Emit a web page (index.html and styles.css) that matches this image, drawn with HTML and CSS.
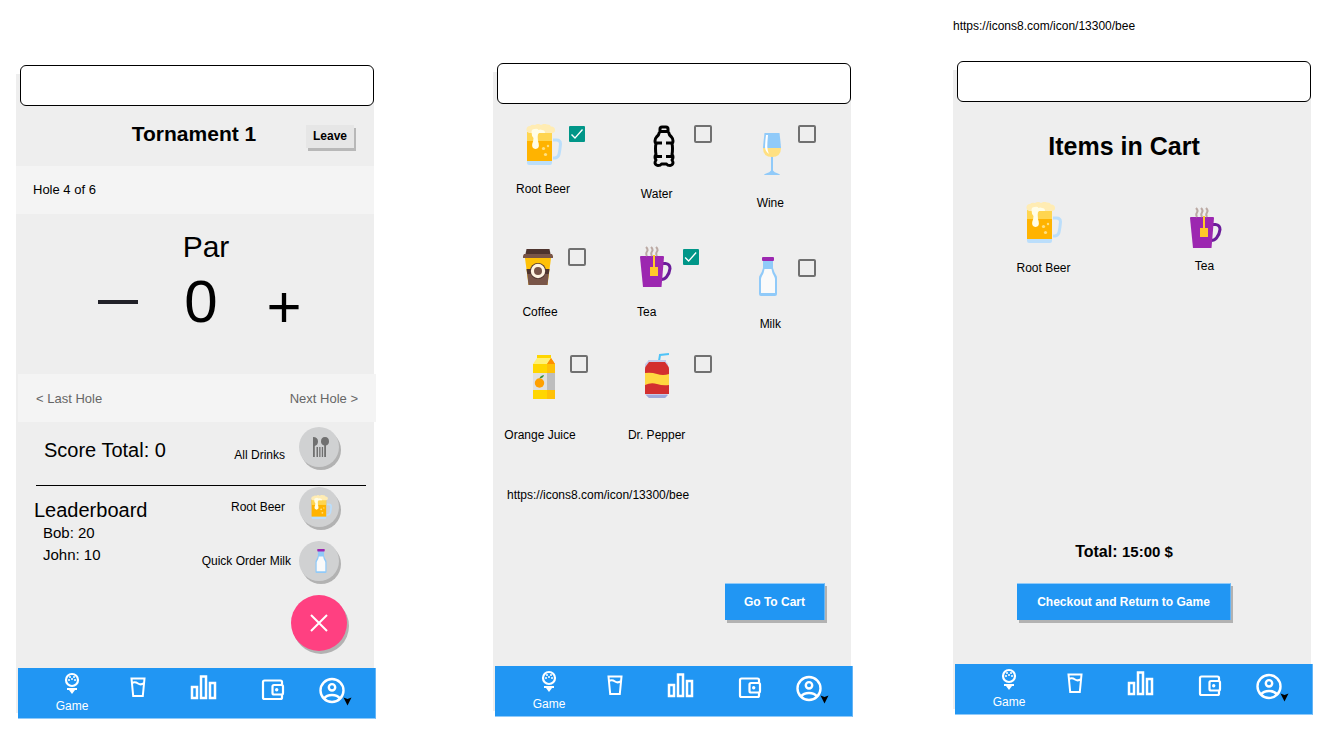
FILE: index.html
```html
<!DOCTYPE html>
<html lang="en">
<head>
<meta charset="utf-8">
<meta name="viewport" content="width=device-width, initial-scale=1">
<title>Tournament drinks</title>
<link rel="stylesheet" href="styles.css">
</head>
<body>
<svg class="sprite" aria-hidden="true">
  <symbol id="beer" viewBox="0 0 36 41">
    <path d="M27 16h3.500q4 0 4 4-.5 6-1.500 10.500-1 3-4 3.500h-2" fill="none" stroke="#bbdefb" stroke-width="3"/>
    <path d="M1 36h25v3q0 2-2 2H3q-2 0-2-2z" fill="#bbdefb"/>
    <path d="M1 8h25v29H1z" fill="#ffb300"/>
    <path d="M1 8h25v9H1z" fill="#ffd54f"/>
    <path d="M3 9Q0 8 .5 5 1 2 4 2q2-2 5-1 3-2 6 0 3-2 6-.5 3-.5 4 2 4 0 4 3.500 0 3-3 3z" fill="#ffecb3"/>
    <path d="M5.500 8q0-3 3-3 3-1 4 1 2-1 3.500 0 3 0 3 3h-6q-1.500 1-1.300 4 0 4 1 6.500 1 5-3.200 5.500-4-.5-3.300-5 1.300-3 1.300-6Q5.500 12 5.500 8z" fill="#fffde7"/>
    <g fill="#ffe082"><circle cx="17.500" cy="24.500" r="1.600"/><circle cx="22" cy="22" r="1.200"/><circle cx="19.500" cy="30.500" r="1.600"/></g>
  </symbol>
  <symbol id="water" viewBox="0 0 22 42">
    <g fill="none" stroke="#000" stroke-width="3" stroke-linejoin="round">
      <path d="M7 7V4q0-2 2-2h4q2 0 2 2v3M6 6.500h10"/>
      <path d="M6.500 7Q6 10 3.500 12 2 13.500 2 16q0 2 1 3-.5 1-.5 4.500t.5 6Q2 30.500 2 32t1 3Q2 36.500 2 38q.5 2.300 3 2.500 2.500 0 3.500-1.500h5q1 1.500 3.500 1.500 2.500-.2 3-2.500 0-1.500-1-3 1-1.500 1-3t-1-2.500q.5-2.500.5-6t-.5-4.500Q20 18 20 16q0-2.500-1.500-4Q16 10 15.500 7"/>
      <path d="M3 18h6M13 18h6M3 31.500h6M13 31.500h6"/>
    </g>
  </symbol>
  <symbol id="wine" viewBox="0 0 18 42">
    <path d="M8 23h2v15h-2z" fill="#90caf9"/>
    <path d="M1 42q0-1 2-1.500 4-1 5-3h2q1 2 5 3 2 .5 2 1.500z" fill="#90caf9"/>
    <path d="M1.500 0h15q1 8 1.500 15H0Q.5 8 1.500 0z" fill="#90caf9"/>
    <path d="M0 15h18q0 9-9 9T0 15z" fill="#ffe082"/>
    <path d="M3 2h2q-.7 7-.7 12 .2 4 1.700 7Q2 18 2 13.500 2.300 7 3 2z" fill="#fff"/>
  </symbol>
  <symbol id="coffee" viewBox="0 0 30 36">
    <path d="M3.500 0h23l1 5h-25z" fill="#4e342e"/>
    <path d="M2 9h26l-3.500 27h-19z" fill="#ffc107"/>
    <path d="M3.500 20h23l-.7 5H4.200z" fill="#4e342e"/>
    <path d="M4.200 25h21.600l-1.300 11h-19z" fill="#795548"/>
    <path d="M1 5h28l1 2v2H0V7z" fill="#795548"/>
    <circle cx="15" cy="22" r="8" fill="#4e342e"/><circle cx="15" cy="22" r="7.200" fill="#fff3e0"/><circle cx="15" cy="22" r="4" fill="#795548"/>
  </symbol>
  <symbol id="tea" viewBox="0 0 32 41">
    <path d="M22.500 17.500h3q4.500.5 4.500 5-.5 5-3.500 8.500-2 2.500-5.500 2.500" fill="none" stroke="#6a1b9a" stroke-width="3"/>
    <path d="M1 10h22q1 0 1 1l-2.500 30H3L0 11q0-1 1-1z" fill="#9c27b0"/>
    <g fill="none" stroke="#bcaaa4" stroke-width="2"><path d="M6 1q2.500 2.500 1 4.500T7 10M11 1q2.500 2.500 1 4.500T12 10M16 1q2.500 2.500 1 4.500T17 10"/></g>
    <path d="M13 9h2v12h3v9h-8v-9h3z" fill="#ffca28"/>
  </symbol>
  <symbol id="milk" viewBox="0 0 18 39">
    <path d="M4 3h10v8q1 4 3 7 1 1 1 3v16q0 2-2 2H2q-2 0-2-2V21q0-2 1-3 2-3 3-7z" fill="#90caf9"/>
    <path d="M5.500 12h7q.5 4 2.500 7 1 2 1 3v14H2V22q0-1 1-3 2-3 2.500-7z" fill="#fafafa"/>
    <rect x="3" width="12" height="4" rx="1" fill="#9c27b0"/>
  </symbol>
  <symbol id="juice" viewBox="0 0 22 44">
    <path d="M4 0h14v3H4z" fill="#ffd600"/><path d="M4 3h14l-4 6H0z" fill="#fff176"/>
    <path d="M0 9h14v35H0z" fill="#ffd600"/><path d="M14 9l4-6 4 6v35h-8z" fill="#ffc107"/>
    <path d="M14 9l4-6 4 6z" fill="#ff8f00"/>
    <path d="M0 18h14v17H0z" fill="#e0e0e0"/><path d="M14 18h8v17h-8z" fill="#bdbdbd"/>
    <circle cx="6.500" cy="28" r="4.700" fill="#ffa000"/><path d="M6.500 23.500q.5-3 4.500-3.500-.5 3-4.500 3.500z" fill="#388e3c"/>
  </symbol>
  <symbol id="soda" viewBox="0 0 24 45">
    <path d="M14 8l1-6 9-1" fill="none" stroke="#4fc3f7" stroke-width="2"/>
    <path d="M3 7h18v2l2 2v30l-3 4H4l-4-4V11l3-3z" fill="#c5cae9"/>
    <path d="M1 42h22l-3 3H4z" fill="#9fa8da"/>
    <path d="M4 9h16l3 4q1 1 1 3v25H0V16q0-2 1-3z" fill="#d32f2f"/>
    <path d="M0 20q6-1 12 1t12 0v11q-6 1-12-1t-12 1z" fill="#ffd740"/>
  </symbol>
  <symbol id="cutlery" viewBox="0 0 16 20">
    <path d="M0 0q5 0 5 4.500Q5 8 1.800 9V20H0zM3.500 10h1.500v10H3.500zM6.200 10h1.300v10H6.200zM8.800 10h1.300v10H8.800zM11.200 8.500Q8 7.500 8 4.500 8 0 12 0t4 4.500q0 3-3 4V20h-1.800z" fill="#707070"/>
  </symbol>
  <symbol id="golf" viewBox="0 0 32 31">
    <circle cx="16" cy="12" r="6" fill="none" stroke="#fff" stroke-width="2.200"/>
    <g fill="#fff"><circle cx="14" cy="9" r="1"/><circle cx="18" cy="9" r="1"/><circle cx="13" cy="12" r="1"/><circle cx="16" cy="11" r="1"/><circle cx="19" cy="12" r="1"/><path d="M11 20h10v2h-2l-3 4-3-4h-2z"/></g>
  </symbol>
  <symbol id="glass" viewBox="0 0 32 36">
    <path d="M9.500 10.500h13l-1.700 17.500h-9.600zM10 15q3-1.500 6 .5t6-.5" fill="none" stroke="#fff" stroke-width="2"/>
  </symbol>
  <symbol id="bars" viewBox="0 0 32 36">
    <path d="M4 19h5v11H4zM13 8.500h5V30h-5zM22 15h5v15h-5z" fill="none" stroke="#fff" stroke-width="2.500"/>
  </symbol>
  <symbol id="wallet" viewBox="0 0 32 36">
    <g fill="none" stroke="#fff" stroke-width="2.200"><rect x="6" y="12.500" width="19" height="18.500" rx="1.500"/><rect x="15.500" y="17" width="10.500" height="9.500" rx="1.500" fill="#2196f3"/></g>
    <circle cx="19.700" cy="21.700" r="1.700" fill="#fff"/>
  </symbol>
  <symbol id="account" viewBox="0 0 46 40">
    <g fill="none" stroke="#fff" stroke-width="2.400"><circle cx="23" cy="22.500" r="11.500"/><circle cx="23" cy="19.300" r="3.200"/><path d="M15 30.500q2.500-3.500 8-3.500t8 3.500"/></g>
    <path d="M34.500 29.500l4 1.500 4-1.500-4 8z" fill="#000"/>
  </symbol>
</svg>

<main class="board">
  <section class="column column--game" aria-label="Game">
    <div class="phone">
      <input class="address" type="text" aria-label="Game address">
      <header class="titlebar">
        <h1 class="titlebar__name">Tornament 1</h1>
        <button class="leave" type="button">Leave</button>
      </header>
      <p class="hole">Hole 4 of 6</p>
      <div class="par">
        <h2 class="par__title">Par</h2>
        <div class="counter">
          <button class="counter__step" type="button" aria-label="Decrease"><span class="counter__minus"></span></button>
          <output class="counter__value">0</output>
          <button class="counter__step counter__step--plus" type="button">+</button>
        </div>
      </div>
      <div class="holes">
        <button class="holes__link" type="button">&lt; Last Hole</button>
        <button class="holes__link" type="button">Next Hole &gt;</button>
      </div>
      <div class="score">
        <p class="score__total">Score Total: 0</p>
        <div class="quick"><label for="all-drinks">All Drinks</label><button class="round" id="all-drinks" type="button"><svg width="16" height="20"><use href="#cutlery"/></svg></button></div>
      </div>
      <div class="standings">
        <div class="leaders">
          <h2 class="leaders__title">Leaderboard</h2>
          <p class="leaders__row">Bob: 20</p>
          <p class="leaders__row">John: 10</p>
        </div>
        <div class="orders">
          <div class="quick"><label for="order-beer">Root Beer</label><button class="round" id="order-beer" type="button"><svg width="21" height="24"><use href="#beer"/></svg></button></div>
          <div class="quick quick--tight"><label for="order-milk">Quick Order Milk</label><button class="round" id="order-milk" type="button"><svg width="14" height="24"><use href="#milk"/></svg></button></div>
          <button class="close" type="button" aria-label="Close"><svg width="18" height="18" viewBox="0 0 18 18"><path d="M1 1l16 16M17 1L1 17" stroke="#fff" stroke-width="2"/></svg></button>
        </div>
      </div>
      <nav class="tabs" aria-label="Game sections">
        <a class="tabs__item" href="#game"><svg width="32" height="31"><use href="#golf"/></svg><span>Game</span></a>
        <a class="tabs__item" href="#drinks" aria-label="Drinks"><svg width="32" height="36"><use href="#glass"/></svg></a>
        <a class="tabs__item" href="#scores" aria-label="Scores"><svg width="32" height="36"><use href="#bars"/></svg></a>
        <a class="tabs__item" href="#wallet-page" aria-label="Wallet"><svg width="32" height="36"><use href="#wallet"/></svg></a>
        <a class="tabs__item" href="#profile" aria-label="Account"><svg width="46" height="40"><use href="#account"/></svg></a>
      </nav>
    </div>
  </section>

  <section class="column column--menu" aria-label="Drinks menu">
    <div class="phone">
      <input class="address" type="text" aria-label="Menu address">
      <div class="drinks">
        <div class="drink drink--broad"><div class="drink__pick"><svg width="64" height="76"><use href="#beer" x="26" y="20" width="36" height="41"/></svg><input class="check" type="checkbox" id="d1" checked></div><label class="drink__name" for="d1">Root Beer</label></div>
        <div class="drink drink--broad drink--wide"><div class="drink__pick"><svg width="64" height="81"><use href="#water" x="39" y="21" width="22" height="42"/></svg><input class="check" type="checkbox" id="d2"></div><label class="drink__name" for="d2">Water</label></div>
        <div class="drink"><div class="drink__pick"><svg width="64" height="90"><use href="#wine" x="33" y="29" width="18" height="42"/></svg><input class="check" type="checkbox" id="d3"></div><label class="drink__name" for="d3">Wine</label></div>
        <div class="drink"><div class="drink__pick"><svg width="64" height="76"><use href="#coffee" x="23" y="22" width="30" height="36"/></svg><input class="check" type="checkbox" id="d4"></div><label class="drink__name" for="d4">Coffee</label></div>
        <div class="drink drink--narrow"><div class="drink__pick"><svg width="64" height="76"><use href="#tea" x="26" y="19" width="32" height="41"/></svg><input class="check" type="checkbox" id="d5" checked></div><label class="drink__name" for="d5">Tea</label></div>
        <div class="drink drink--low"><div class="drink__pick"><svg width="64" height="88"><use href="#milk" x="29" y="30" width="18" height="39"/></svg><input class="check" type="checkbox" id="d6"></div><label class="drink__name" for="d6">Milk</label></div>
        <div class="drink drink--high"><div class="drink__pick"><svg width="64" height="76"><use href="#juice" x="33" y="5" width="22" height="44"/></svg><input class="check" type="checkbox" id="d7"></div><label class="drink__name" for="d7">Orange Juice</label></div>
        <div class="drink drink--broad drink--high drink--wide"><div class="drink__pick"><svg width="64" height="76"><use href="#soda" x="31" y="3" width="24" height="45"/></svg><input class="check" type="checkbox" id="d8"></div><label class="drink__name" for="d8">Dr. Pepper</label></div>
      </div>
      <p class="source">https://icons8.com/icon/13300/bee</p>
      <button class="action action--cart" type="button">Go To Cart</button>
      <nav class="tabs" aria-label="Menu sections">
        <a class="tabs__item" href="#game"><svg width="32" height="31"><use href="#golf"/></svg><span>Game</span></a>
        <a class="tabs__item" href="#drinks" aria-label="Drinks"><svg width="32" height="36"><use href="#glass"/></svg></a>
        <a class="tabs__item" href="#scores" aria-label="Scores"><svg width="32" height="36"><use href="#bars"/></svg></a>
        <a class="tabs__item" href="#wallet-page" aria-label="Wallet"><svg width="32" height="36"><use href="#wallet"/></svg></a>
        <a class="tabs__item" href="#profile" aria-label="Account"><svg width="46" height="40"><use href="#account"/></svg></a>
      </nav>
    </div>
  </section>

  <section class="column column--checkout" aria-label="Cart">
    <p class="note">https://icons8.com/icon/13300/bee</p>
    <div class="phone">
      <input class="address" type="text" aria-label="Cart address">
      <div class="cart">
        <h1 class="cart__title">Items in Cart</h1>
        <ul class="cart__items">
          <li class="item"><svg width="80" height="68"><use href="#beer" x="22" y="9" width="36" height="41"/></svg>Root Beer</li>
          <li class="item"><svg width="80" height="66"><use href="#tea" x="25" y="14" width="32" height="41"/></svg>Tea</li>
        </ul>
        <p class="cart__total">Total: <span class="cart__sum">15:00 $</span></p>
        <button class="action action--checkout" type="button">Checkout and Return to Game</button>
      </div>
      <nav class="tabs" aria-label="Cart sections">
        <a class="tabs__item" href="#game"><svg width="32" height="31"><use href="#golf"/></svg><span>Game</span></a>
        <a class="tabs__item" href="#drinks" aria-label="Drinks"><svg width="32" height="36"><use href="#glass"/></svg></a>
        <a class="tabs__item" href="#scores" aria-label="Scores"><svg width="32" height="36"><use href="#bars"/></svg></a>
        <a class="tabs__item" href="#wallet-page" aria-label="Wallet"><svg width="32" height="36"><use href="#wallet"/></svg></a>
        <a class="tabs__item" href="#profile" aria-label="Account"><svg width="46" height="40"><use href="#account"/></svg></a>
      </nav>
    </div>
  </section>
</main>
</body>
</html>
```

FILE: styles.css
```css
* { box-sizing: border-box; margin: 0; padding: 0; }

body {
  background: #fff;
  color: #000;
  font: 12px/14px "Liberation Sans", Arial, sans-serif;
}

button, input { font: inherit; color: inherit; border: 0; background: none; }
button { cursor: pointer; }
svg { display: block; flex: none; }
.sprite { width: 0; height: 0; position: absolute; }

/* Three screens side by side; the even tracks are the space between them */
.board {
  display: grid;
  grid-template-columns: 360fr 117fr 360fr 100fr 360fr;
  align-items: start;
  padding: 0 16px 16px;
}
.column--game { grid-column: 1; padding-top: 65px; }
.column--menu { grid-column: 3; padding-top: 63px; }
.column--checkout { grid-column: 5; padding-top: 19px; }
.note { margin-bottom: 28px; }

.phone {
  display: flex;
  flex-direction: column;
  min-height: 654px;
  background: linear-gradient(#eee, #eee) 0 9px / calc(100% - 2px) calc(100% - 15px) no-repeat;
}
.address {
  height: 41px;
  margin: 0 2px 0 4px;
  padding: 0 12px;
  border: 1px solid #000;
  border-radius: 6px;
  background: #fff;
}

/* Game screen */
.titlebar {
  display: grid;
  grid-template-columns: 1fr auto 1fr;
  align-items: center;
  height: 60px;
  padding-right: 22px;
  padding-left: 18px;
}
.titlebar__name { grid-column: 2; font-size: 21px; line-height: 24px; padding-bottom: 4px; }
.leave {
  justify-self: end;
  height: 23px;
  padding: 0 7px;
  background: #e6e6e6;
  box-shadow: 2px 3px 0 #b8b8b8;
  font-weight: bold;
}
.hole {
  margin-right: 2px;
  padding: 0 17px;
  background: #f4f4f4;
  font-size: 13px;
  line-height: 48px;
}
.par { height: 160px; padding-top: 16px; padding-left: 20px; text-align: center; }
.par__title { font-size: 30px; font-weight: normal; line-height: 34px; }
.counter {
  display: grid;
  grid-template-columns: 94px 72px 94px;
  align-items: center;
  justify-content: center;
  height: 76px;
  padding-right: 10px;
}
.counter__step { justify-self: center; font-size: 60px; line-height: 60px; }
.counter__step--plus { padding-top: 10px; }
.counter__value { font-size: 60px; line-height: 68px; }
.counter__minus { display: block; width: 40px; height: 4px; background: #212128; }
.holes {
  display: flex;
  justify-content: space-between;
  align-items: center;
  height: 48px;
  margin-left: 2px;
  padding: 1px 18px 0;
  background: #f4f4f4;
}
.holes__link { color: #666; font-size: 13px; line-height: 16px; }

.score {
  display: flex;
  justify-content: space-between;
  height: 64px;
  margin: 0 10px 0 20px;
  padding: 5px 27px 0 8px;
  border-bottom: 1px solid #000;
}
.score__total { font-size: 20px; line-height: 46px; }
.quick { display: flex; align-items: center; gap: 14px; height: 40px; }
.quick--tight { gap: 8px; }
.score .quick { align-items: start; }
.score .quick label { padding-top: 21px; }
.round {
  display: grid;
  place-items: center;
  width: 40px;
  height: 40px;
  border-radius: 50%;
  background: #d0d1d2;
  box-shadow: 2px 3px 0 #b2b2b2;
}
.round svg { margin-left: 4px; }
.standings { display: flex; justify-content: space-between; flex: 1; padding: 1px 29px 17px 18px; }
.leaders { padding-top: 11px; }
.leaders__title { font-size: 20px; font-weight: normal; line-height: 24px; }
.leaders__row { padding-left: 9px; font-size: 15px; line-height: 22px; }
.orders { display: flex; flex-direction: column; align-items: end; gap: 14px; }
.orders .quick { margin-right: 8px; }
.close {
  display: grid;
  place-items: center;
  width: 56px;
  height: 56px;
  border-radius: 50%;
  background: #ff4081;
  box-shadow: 2px 3px 0 #b2b2b2;
}

/* Menu screen */
.drinks {
  display: grid;
  grid-template-columns: 113fr 116fr 122fr;
  grid-auto-rows: 123px;
  padding-left: 7px;
}
.drink { width: 80px; }
.drink__pick { display: flex; gap: 4px; }
.drink__name { display: block; line-height: 18px; text-align: center; }
.drink--narrow { width: 66px; }
.drink--broad { width: 86px; }
.drink--high .drink__pick { gap: 6px; }
.drink--wide .drink__pick { gap: 16px; }
.check {
  appearance: none;
  flex: none;
  width: 18px;
  height: 18px;
  margin-top: 21px;
  border: 2px solid #707070;
  border-radius: 2px;
}
.drink--low .check { margin-top: 32px; }
.drink--high .check { margin-top: 5px; }
.check:checked { border: 1px solid transparent; background: #009688 padding-box; }
.check:checked::before {
  content: "";
  display: block;
  width: 16px;
  height: 16px;
  background: #fff;
  clip-path: polygon(2px 9px, 3px 8px, 6px 11px, 13px 3px, 14px 4px, 6px 13px);
}
.source { padding: 15px 14px 0; }
.action {
  height: 37px;
  border-top: 1px solid #90caf9;
  border-right: 1px solid #64b5f6;
  background: #2196f3;
  box-shadow: 2px 3px 0 #b2b2b2;
  color: #fff;
  font-weight: bold;
}
.action--cart { align-self: end; margin: auto 28px 46px 0; padding: 0 19px; }
.action--checkout { margin: 21px 0 44px; padding: 0 20px; }

/* Cart screen */
.cart {
  display: flex;
  flex: 1;
  flex-direction: column;
  align-items: center;
  padding: 29px 18px 0 0;
}
.cart__title { font-size: 25px; line-height: 30px; }
.cart__items { display: flex; gap: 81px; padding-top: 32px; list-style: none; }
.item { text-align: center; }
.cart__total { margin-top: auto; font-size: 16px; font-weight: bold; line-height: 20px; }
.cart__sum { font-size: 15px; }

/* Bottom navigation */
.tabs {
  display: grid;
  grid-template-columns: 66fr 66fr 66fr 72fr 46fr;
  height: 51px;
  margin-left: 2px;
  padding: 0 20px 0 21px;
  border-right: 1px solid #64b5f6;
  border-bottom: 1px solid #90caf9;
  background: #2196f3;
}
.tabs__item {
  display: flex;
  flex-direction: column;
  align-items: center;
  color: #fff;
  text-decoration: none;
}
```
